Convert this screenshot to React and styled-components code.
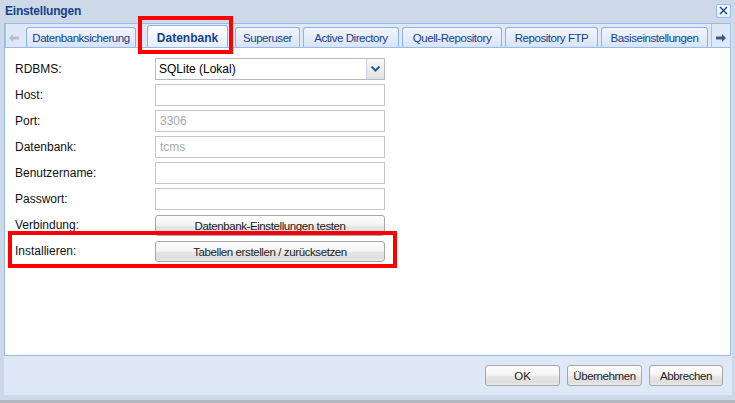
import React from 'react';
import styled, { createGlobalStyle } from 'styled-components';

const GlobalStyle = createGlobalStyle`
  html, body {
    margin: 0;
    padding: 0;
    background: #cdd9e8;
  }
  body {
    font-family: "Liberation Sans", Arial, sans-serif;
    font-size: 12px;
  }
`;

const Window = styled.div`
  position: relative;
  width: 735px;
  height: 403px;
  background: #cdd9e8;
  display: flex;
  flex-direction: column;
  overflow: hidden;
`;

const Header = styled.div`
  height: 23px;
  display: flex;
  align-items: center;
  justify-content: space-between;
  padding: 0 4px 0 5px;
`;

const Title = styled.div`
  font-weight: bold;
  font-size: 12px;
  letter-spacing: -0.2px;
  color: #15428b;
  margin-top: -1px;
`;

const CloseButton = styled.div`
  width: 13px;
  height: 12px;
  border: 1px solid #99bbe8;
  border-radius: 2px;
  background: linear-gradient(#f6f9fd, #e3ebf6);
  display: flex;
  align-items: center;
  justify-content: center;
  margin-top: -2px;
`;

const Frame = styled.div`
  flex: 1;
  margin: 0 3px 0 4px;
  background: #dfe8f6;
  display: flex;
  flex-direction: column;
`;

const TabPanel = styled.div`
  margin-right: 1px;
  display: flex;
  flex-direction: column;
`;

const Strip = styled.div`
  height: 23px;
  border: 1px solid #99bbe8;
  border-bottom: none;
  background: #dfe8f6;
  display: flex;
`;

const Scroller = styled.div`
  width: ${p => p.w}px;
  display: flex;
  align-items: center;
  justify-content: center;
  padding-top: 4px;
  border-${p => p.side}: 1px solid #a9c3e6;
  box-sizing: border-box;
`;

const TabsTrack = styled.div`
  flex: 1;
  display: flex;
  align-items: flex-end;
  gap: 3px;
  padding-left: 4px;
  overflow: hidden;
`;

const Tab = styled.div`
  position: relative;
  flex: none;
  box-sizing: border-box;
  width: ${p => p.w}px;
  height: ${p => (p.active ? 23 : 20)}px;
  margin: ${p => (p.active ? '0 4px -1px 8px' : '0')};
  border: 1px solid #8db2e3;
  border-bottom: none;
  border-radius: 3px 3px 0 0;
  background: ${p =>
    p.active
      ? 'linear-gradient(#ffffff 0%, #f1f6fd 50%, #e4edf9 100%)'
      : 'linear-gradient(#f1f5fc 0%, #e5edf9 50%, #d6e3f5 100%)'};
  color: #15428b;
  font-size: ${p => (p.active ? 12 : 11.5)}px;
  font-weight: ${p => (p.active ? 'bold' : 'normal')};
  letter-spacing: ${p => (p.active ? 0 : -0.45)}px;
  display: flex;
  align-items: center;
  justify-content: center;
  padding-top: ${p => (p.active ? 1 : 0)}px;
  white-space: nowrap;
  z-index: ${p => (p.active ? 1 : 0)};
`;

const TabBody = styled.div`
  height: 309px;
  border: 1px solid #99bbe8;
  background: #fff;
  padding: 10px 0 0 10px;
  box-sizing: border-box;
  display: flex;
  flex-direction: column;
  gap: 4px;
`;

const Row = styled.div`
  display: flex;
  align-items: center;
  height: 22px;
`;

const Label = styled.div`
  width: 140px;
  color: #111;
  font-size: 12px;
`;

const Field = styled.div`
  width: 230px;
  height: ${p => p.h || 22}px;
  box-sizing: border-box;
  border: 1px solid #c3c6d2;
  background: #fff;
  display: flex;
  align-items: center;
  padding-left: 4px;
  color: ${p => (p.muted ? '#a8a8a8' : '#000')};
  font-size: 12px;
`;

const Combo = styled(Field)`
  padding-left: 3px;
  padding-right: 0;
  justify-content: space-between;
  border-color: #b5b8c8;
`;

const Trigger = styled.div`
  width: 17px;
  height: 20px;
  border-left: 1px solid #cfd2da;
  background: linear-gradient(#f7f7f7, #e2e2e2);
  display: flex;
  align-items: center;
  justify-content: center;
`;

const GrayButton = styled.div`
  width: ${p => p.w}px;
  height: ${p => p.h || 21}px;
  box-sizing: border-box;
  border: 1px solid #a6a6a6;
  border-radius: 3px;
  background: linear-gradient(
    #fdfdfd 0%,
    #f4f4f4 48%,
    #e6e6e6 55%,
    #dedede 85%,
    #ececec 100%
  );
  display: flex;
  align-items: center;
  justify-content: center;
  color: #222;
  font-size: 11.5px;
  letter-spacing: ${p => (p.tight ? -0.4 : 0)}px;
  white-space: nowrap;
  padding-top: 1px;
`;

const Footer = styled.div`
  height: 37px;
  display: flex;
  justify-content: flex-end;
  align-items: flex-start;
  gap: 7px;
  padding: 9px 9px 0 0;
  box-sizing: border-box;
`;

const BottomEdge = styled.div`
  height: 5px;
  background: #cdd9e8;
  border-bottom: 3px solid #b3b9c0;
`;

const Highlight = styled.div`
  position: absolute;
  left: ${p => p.x}px;
  top: ${p => p.y}px;
  width: ${p => p.w}px;
  height: ${p => p.h}px;
  border: 4px solid #ff0000;
  box-sizing: border-box;
  pointer-events: none;
  z-index: 5;
`;

const tabs = [
  { label: 'Datenbanksicherung', w: 110 },
  { label: 'Datenbank', w: 81, active: true },
  { label: 'Superuser', w: 65 },
  { label: 'Active Directory', w: 96 },
  { label: 'Quell-Repository', w: 100 },
  { label: 'Repository FTP', w: 93 },
  { label: 'Basiseinstellungen', w: 107 },
  { label: '', w: 30 }
];

const ArrowLeft = () => (
  <svg width="10" height="8" viewBox="0 0 10 8">
    <path d="M0 4 L4 0 L4 2.5 L10 2.5 L10 5.5 L4 5.5 L4 8 Z" fill="#b5c1d0" />
  </svg>
);

const ArrowRight = () => (
  <svg width="10" height="8" viewBox="0 0 10 8">
    <path d="M10 4 L6 0 L6 2.5 L0 2.5 L0 5.5 L6 5.5 L6 8 Z" fill="#3b5d8c" />
  </svg>
);

const CloseIcon = () => (
  <svg width="9" height="9" viewBox="0 0 9 9">
    <path d="M1 1 L8 8 M8 1 L1 8" stroke="#15428b" strokeWidth="1.3" fill="none" />
  </svg>
);

const Chevron = () => (
  <svg width="9" height="6" viewBox="0 0 9 6">
    <path d="M0.5 0.5 L4.5 4.5 L8.5 0.5" stroke="#2d5b9c" strokeWidth="2" fill="none" />
  </svg>
);

export default function App() {
  return (
    <>
      <GlobalStyle />
      <Window>
        <Header>
          <Title>Einstellungen</Title>
          <CloseButton>
            <CloseIcon />
          </CloseButton>
        </Header>
        <Frame>
          <TabPanel>
            <Strip>
              <Scroller w={17} side="left">
                <ArrowLeft />
              </Scroller>
              <TabsTrack>
                {tabs.map((t, i) => (
                  <Tab key={i} w={t.w} active={t.active}>
                    {t.label}
                  </Tab>
                ))}
              </TabsTrack>
              <Scroller w={19} side="left">
                <ArrowRight />
              </Scroller>
            </Strip>
            <TabBody>
              <Row>
                <Label>RDBMS:</Label>
                <Combo>
                  SQLite (Lokal)
                  <Trigger>
                    <Chevron />
                  </Trigger>
                </Combo>
              </Row>
              <Row>
                <Label>Host:</Label>
                <Field />
              </Row>
              <Row>
                <Label>Port:</Label>
                <Field muted>3306</Field>
              </Row>
              <Row>
                <Label>Datenbank:</Label>
                <Field muted>tcms</Field>
              </Row>
              <Row>
                <Label>Benutzername:</Label>
                <Field />
              </Row>
              <Row>
                <Label>Passwort:</Label>
                <Field />
              </Row>
              <Row>
                <Label>Verbindung:</Label>
                <GrayButton w={230} tight>Datenbank-Einstellungen testen</GrayButton>
              </Row>
              <Row>
                <Label>Installieren:</Label>
                <GrayButton w={230} tight>Tabellen erstellen / zurücksetzen</GrayButton>
              </Row>
            </TabBody>
          </TabPanel>
          <Footer>
            <GrayButton w={75}>OK</GrayButton>
            <GrayButton w={75} tight>Übernehmen</GrayButton>
            <GrayButton w={74} tight>Abbrechen</GrayButton>
          </Footer>
        </Frame>
        <BottomEdge />
        <Highlight x={138} y={16} w={95} h={38} />
        <Highlight x={8} y={231} w={389} h={37} />
      </Window>
    </>
  );
}
